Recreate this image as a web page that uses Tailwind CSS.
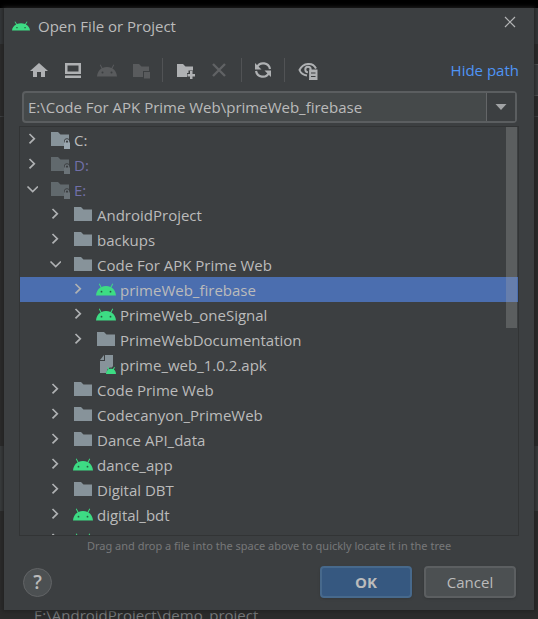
<!DOCTYPE html>
<html lang="en">
<head>
<meta charset="utf-8">
<meta name="viewport" content="width=device-width, initial-scale=1">
<title>Open File or Project</title>
<script src="https://cdn.jsdelivr.net/npm/@tailwindcss/browser@4"></script>
</head>
<body class="relative flex h-screen flex-col overflow-hidden bg-[#2b2b2b] font-['Open_Sans','Noto_Sans',sans-serif] text-[15px] leading-5 text-[#bbbbbb]">

<svg class="hidden" aria-hidden="true">
  <symbol id="folder" viewBox="0 0 20 21"><path fill="#87939a" d="M1 3h7l2.500 2.500H19V17H1z"/></symbol>
  <symbol id="drive" viewBox="0 0 20 21"><path fill="#87939a" d="M1 3h7l2.500 2.500H19V10a3 3 0 0 0-5 2.500V17H1z"/><path fill="#9aa7b0" d="M14 13.500h6V20h-6z"/><path fill="none" stroke="#9aa7b0" stroke-width="1.200" d="M15.300 14v-1.500a1.700 1.700 0 0 1 3.400 0V14"/></symbol>
  <symbol id="android" viewBox="0 0 20 21"><path fill="#3ddc84" d="M0 16.500C.2 12.800 2 10 4.600 8.500L2.800 4.900l.8-.4 1.900 3.500c2.700-1.300 6.300-1.300 9 0l1.900-3.500.8.4-1.800 3.600c2.600 1.500 4.400 4.300 4.600 8z"/><circle cx="5.500" cy="12.700" r=".9" fill="#265c40"/><circle cx="14.500" cy="12.700" r=".9" fill="#265c40"/></symbol>
  <symbol id="apk" viewBox="0 0 20 21"><path fill="#87939a" d="M9 1h8v11l-1 1.500c-3-.5-5 1-5.500 5.500H4V7h5z"/><path fill="#87939a" d="M4 6l4-5v5z"/><path fill="#3ddc84" d="M10 20c.1-2 1-3.500 2.300-4.400L11.100 13.500l.8-.5 1.300 2.100c1.200-.5 2.500-.5 3.700 0l1.300-2.100.8.5-1.200 2.100C19.100 16.500 19.900 18 20 20z"/></symbol>
  <symbol id="right" viewBox="0 0 12 21"><path fill="none" stroke="#afb1b3" stroke-width="1.700" d="M3.500 5l4.800 4.700-4.800 4.700"/></symbol>
  <symbol id="down" viewBox="0 0 12 21"><path fill="none" stroke="#afb1b3" stroke-width="1.700" d="M1.500 7.500l5.200 5 5.200-5"/></symbol>
</svg>

<div class="h-2 shrink-0 bg-black"></div>
<div class="absolute left-0 top-2 h-9 w-full bg-[#35383a]" aria-hidden="true"></div>
<div class="absolute bottom-27 right-0 top-[446px] w-full bg-[#3a3d3f]" aria-hidden="true"></div>
<div class="absolute right-0 top-16 h-8 w-1 overflow-hidden border-y border-[#555759] bg-[#3c3f41]" aria-hidden="true"></div>
<div class="absolute left-0 top-29 h-px w-full bg-[#414446]" aria-hidden="true"></div>

<main role="dialog" aria-labelledby="title" class="relative mx-1 flex min-h-0 flex-1 flex-col bg-[#3c3f41] shadow-[0_0_4px_1px_#202020]">
  <header class="flex h-9 shrink-0 items-center pl-2 pr-4">
    <svg class="h-4 w-[18px]" viewBox="0 0 20 21" preserveAspectRatio="none" aria-hidden="true"><use href="#android"/></svg>
    <h1 id="title" class="flex-1 pl-2">Open File or Project</h1>
    <button aria-label="Close" class="mb-2 size-4"><svg viewBox="0 0 16 16" fill="none" stroke="#b4b5b6" stroke-width="1.200"><path d="M3 3l10 10M13 3L3 13"/></svg></button>
  </header>

  <div class="flex h-[47px] shrink-0 items-center pl-6 pr-[15px] pt-1">
    <div class="flex flex-1 items-center" role="toolbar" aria-label="File actions">
      <button aria-label="Home" class="mr-3 size-[22px]"><svg viewBox="0 0 22 22" fill="#afb1b3"><path d="M11 4l9 8h-3v6h-4v-5H9v5H5v-6H2z"/></svg></button>
      <button aria-label="Desktop" class="mr-3 size-[22px]"><svg viewBox="0 0 22 22" fill="#afb1b3"><path fill-rule="evenodd" d="M3 4h16v11H3zm2.500 2.500v6h11v-6zM3 16.500h16V19H3z"/></svg></button>
      <button aria-label="Project folder" disabled class="mr-3 size-[22px]"><svg viewBox="0 0 22 22" fill="#595b5d"><path d="M1 17.500C1.200 13.800 3 11 5.600 9.500L3.800 5.900l.8-.4L6.500 9c2.700-1.300 6.300-1.300 9 0l1.900-3.500.8.4-1.800 3.600c2.600 1.500 4.400 4.300 4.600 8z"/><g fill="#3c3f41"><circle cx="6.500" cy="13.500" r="1"/><circle cx="15.500" cy="13.500" r="1"/></g></svg></button>
      <button aria-label="Module folder" disabled class="mr-2.5 size-[22px]"><svg viewBox="0 0 22 22" fill="#595b5d"><path d="M3 5h6l2.500 2.500H19V12h-6v6H3z"/><path d="M14 13h6v6.500h-6z"/></svg></button>
      <span class="mr-3 h-6 w-px bg-[#515355]"></span>
      <button aria-label="New folder" class="mr-3 size-[22px]"><svg viewBox="0 0 22 22" fill="#afb1b3"><path d="M2 5h6l2.500 2.500H18v4h-4.500V14H12v4H2z"/><path d="M15 12h2.500v3H20v2.500h-2.500V20H15v-2.500h-2.500V15H15z"/></svg></button>
      <button aria-label="Delete" disabled class="mr-2.5 size-[22px]"><svg viewBox="0 0 22 22" fill="none" stroke="#606264" stroke-width="2.400"><path d="M4 5l12 12M16 5L4 17"/></svg></button>
      <span class="mr-2.5 h-6 w-px bg-[#515355]"></span>
      <button aria-label="Refresh" class="mr-2.5 size-[22px]"><svg viewBox="0 0 22 22" fill="none" stroke="#afb1b3" stroke-width="2.200"><path d="M5 8A7 7 0 0 1 18 10M17 14A7 7 0 0 1 4 12"/><path stroke="none" fill="#afb1b3" d="M3 4v6.500h6.500zM19 18v-6.500h-6.500z"/></svg></button>
      <span class="mr-3 h-6 w-px bg-[#515355]"></span>
      <button aria-label="Show hidden files" class="size-[22px]"><svg viewBox="0 0 22 22" fill="none" stroke="#afb1b3"><path stroke-width="2" d="M10 16.500C6 16 3.500 13.500 2.500 11 6 3.500 16 3 19 9.500"/><circle cx="11" cy="10.500" r="2.700" stroke-width="2"/><path stroke="none" fill="#afb1b3" d="M12 10.500h8.500V21H12z"/><path stroke="#3c3f41" stroke-width="1.200" d="M14 14h4.500M14 17.500h4.500M11.500 10v10"/></svg></button>
    </div>
    <a href="#path" class="text-[#4f94f5]">Hide path</a>
  </div>

  <div class="ml-[18px] mr-[17px] flex h-8 shrink-0 rounded-[4px] border-2 border-[#5b5e60] bg-[#45494a]">
    <input id="path" type="text" aria-label="Path" value="E:\Code For APK Prime Web\primeWeb_firebase" class="min-w-0 flex-1 bg-transparent pl-1 outline-none">
    <button aria-label="Path history" class="flex w-[29px] items-center justify-center border-l border-[#646668] bg-[#3c3f41]"><svg class="h-2 w-3" viewBox="0 0 12 8" fill="#a1a3a5"><path d="M.5 1h11L6 7z"/></svg></button>
  </div>

  <div class="relative mx-[15px] mt-[3px] min-h-0 flex-1 overflow-hidden border border-[#323435]">
    <ul role="tree" aria-label="Files" class="*:flex *:h-[25px] *:items-center *:whitespace-nowrap [&_svg]:h-[21px] [&_svg]:shrink-0">
      <li role="treeitem" aria-level="1" class="pl-1.5"><svg class="mr-3 w-3"><use href="#right"/></svg><svg class="mr-1 w-5"><use href="#drive"/></svg>C:</li>
      <li role="treeitem" aria-level="1" class="pl-1.5 text-[#716fa8]"><svg class="mr-3 w-3"><use href="#right"/></svg><svg class="mr-1 w-5 opacity-50"><use href="#drive"/></svg>D:</li>
      <li role="treeitem" aria-level="1" aria-expanded="true" class="pl-1.5 text-[#716fa8]"><svg class="mr-3 w-3"><use href="#down"/></svg><svg class="mr-1 w-5 opacity-50"><use href="#drive"/></svg>E:</li>
      <li role="treeitem" aria-level="2" class="pl-[29px]"><svg class="mr-3 w-3"><use href="#right"/></svg><svg class="mr-1 w-5"><use href="#folder"/></svg>AndroidProject</li>
      <li role="treeitem" aria-level="2" class="pl-[29px]"><svg class="mr-3 w-3"><use href="#right"/></svg><svg class="mr-1 w-5"><use href="#folder"/></svg>backups</li>
      <li role="treeitem" aria-level="2" aria-expanded="true" class="pl-[29px]"><svg class="mr-3 w-3"><use href="#down"/></svg><svg class="mr-1 w-5"><use href="#folder"/></svg>Code For APK Prime Web</li>
      <li role="treeitem" aria-level="3" aria-selected="true" class="bg-[#4b6eaf] pl-[52px]"><svg class="mr-3 w-3"><use href="#right"/></svg><svg class="mr-1 w-5"><use href="#android"/></svg>primeWeb_firebase</li>
      <li role="treeitem" aria-level="3" class="pl-[52px]"><svg class="mr-3 w-3"><use href="#right"/></svg><svg class="mr-1 w-5"><use href="#android"/></svg>PrimeWeb_oneSignal</li>
      <li role="treeitem" aria-level="3" class="pl-[52px]"><svg class="mr-3 w-3"><use href="#right"/></svg><svg class="mr-1 w-5"><use href="#folder"/></svg>PrimeWebDocumentation</li>
      <li role="treeitem" aria-level="3" class="pl-[76px]"><svg class="mr-1 w-5"><use href="#apk"/></svg>prime_web_1.0.2.apk</li>
      <li role="treeitem" aria-level="2" class="pl-[29px]"><svg class="mr-3 w-3"><use href="#right"/></svg><svg class="mr-1 w-5"><use href="#folder"/></svg>Code Prime Web</li>
      <li role="treeitem" aria-level="2" class="pl-[29px]"><svg class="mr-3 w-3"><use href="#right"/></svg><svg class="mr-1 w-5"><use href="#folder"/></svg>Codecanyon_PrimeWeb</li>
      <li role="treeitem" aria-level="2" class="pl-[29px]"><svg class="mr-3 w-3"><use href="#right"/></svg><svg class="mr-1 w-5"><use href="#folder"/></svg>Dance API_data</li>
      <li role="treeitem" aria-level="2" class="pl-[29px]"><svg class="mr-3 w-3"><use href="#right"/></svg><svg class="mr-1 w-5"><use href="#android"/></svg>dance_app</li>
      <li role="treeitem" aria-level="2" class="pl-[29px]"><svg class="mr-3 w-3"><use href="#right"/></svg><svg class="mr-1 w-5"><use href="#folder"/></svg>Digital DBT</li>
      <li role="treeitem" aria-level="2" class="pl-[29px]"><svg class="mr-3 w-3"><use href="#right"/></svg><svg class="mr-1 w-5"><use href="#android"/></svg>digital_bdt</li>
      <li role="treeitem" aria-level="2" class="pl-[29px]"><svg class="mr-3 w-3"><use href="#right"/></svg><svg class="mr-1 w-5"><use href="#android"/></svg></li>
    </ul>
    <div class="absolute right-px top-0 h-[201px] w-[11px] bg-[#a6a6a6]/30" aria-hidden="true"></div>
  </div>

  <p class="shrink-0 text-center font-['Noto_Sans',sans-serif] text-[11px] leading-5 text-[#777879]">Drag and drop a file into the space above to quickly locate it in the tree</p>

  <footer class="flex shrink-0 items-center gap-3 pb-3 pl-[19px] pr-[18px] pt-2.5">
    <button aria-label="Help" class="flex size-[29px] items-center justify-center rounded-full border border-[#626466] bg-[#4c5052] text-[19px] font-semibold">?</button>
    <span class="flex-1"></span>
    <button class="h-8 w-[92px] rounded-[4px] border-2 border-[#47698c] bg-[#365880] font-bold shadow-sm">OK</button>
    <button class="h-8 w-[92px] rounded-[4px] border-2 border-[#5c5f61] bg-[#4c5052] shadow-sm">Cancel</button>
  </footer>
</main>
<div class="h-[9px] shrink-0 overflow-hidden pl-[34px] leading-[10px] text-[#77797b]">E:\AndroidProject\demo_project</div>
</body>
</html>
